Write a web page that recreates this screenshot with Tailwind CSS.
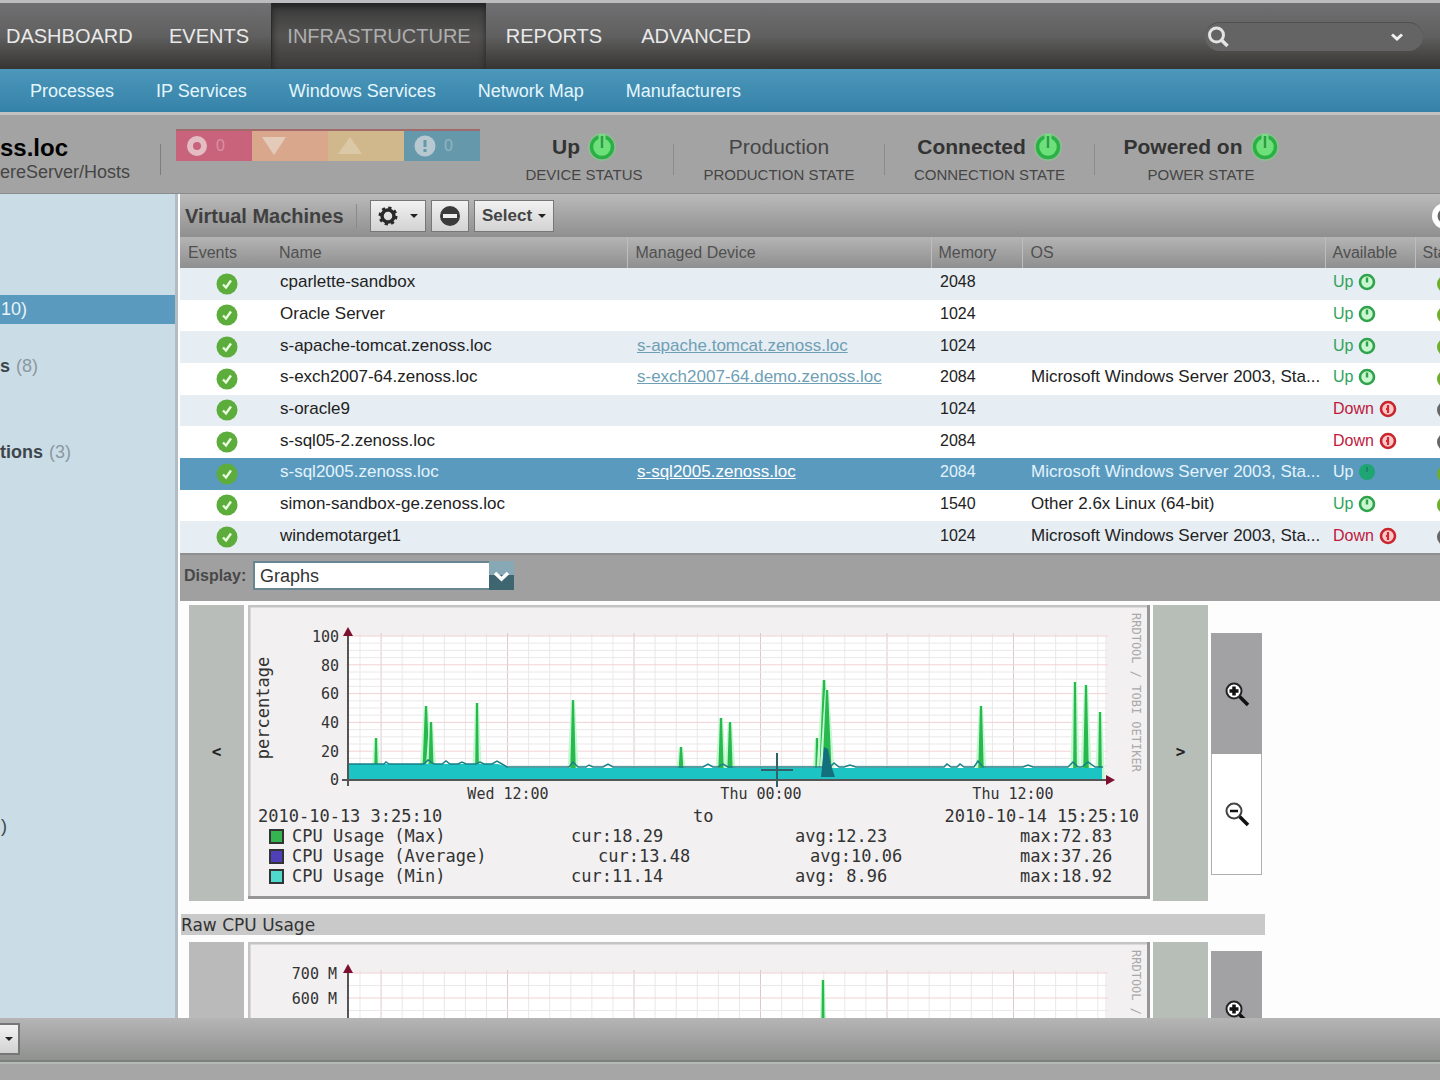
<!DOCTYPE html>
<html lang="en">
<head>
  <meta charset="UTF-8" />
  <meta name="viewport" content="width=device-width, initial-scale=1.0" />
  <title>Infrastructure - Virtual Machines</title>
  <script src="https://cdn.jsdelivr.net/npm/@tailwindcss/browser@4"></script>
</head>
<body class="h-screen flex flex-col overflow-hidden bg-[#a5a5a5] font-['Liberation_Sans',Arial,sans-serif] text-[#222]">

<!-- Shared icons -->
<svg class="hidden">
  <symbol id="power" viewBox="0 0 28 28">
    <circle cx="14" cy="14" r="14" fill="#7ad884" opacity=".5"/>
    <circle cx="14" cy="14" r="10.5" fill="#6ee07a" stroke="#2bb045" stroke-width="3.500"/>
    <path d="M14 1v13" stroke="#79dc85" stroke-width="7"/>
    <path d="M14 3v12" stroke="#2ba043" stroke-width="2.500"/>
  </symbol>
  <symbol id="check" viewBox="0 0 22 22">
    <circle cx="11" cy="11" r="10.5" fill="#5cad3c"/>
    <path d="M7 11.500l3 3L15 7.500" fill="none" stroke="#eaffe0" stroke-width="2.400"/>
  </symbol>
  <symbol id="up" viewBox="0 0 18 18">
    <circle cx="9" cy="9" r="7" fill="#c9f7cf" stroke="#2fa34c" stroke-width="2.600"/>
    <path d="M9 4.500v5" stroke="#2fa34c" stroke-width="2.400"/>
  </symbol>
  <symbol id="up-selected" viewBox="0 0 18 18">
    <circle cx="9" cy="9" r="8" fill="#1fa573"/>
    <path d="M9 4v5" stroke="#158a64" stroke-width="2"/>
  </symbol>
  <symbol id="down" viewBox="0 0 18 18">
    <circle cx="9" cy="9" r="7" fill="#fbc9c9" stroke="#c9252d" stroke-width="2.600"/>
    <path d="M9 5v8M7 9h2" stroke="#d8262d" stroke-width="2.200"/>
  </symbol>
  <symbol id="zoom-in" viewBox="0 0 26 26">
    <path d="M15 15l9 9" stroke="#111" stroke-width="3.500"/>
    <circle cx="10" cy="10" r="7.500" fill="#fff" stroke="#222" stroke-width="2"/>
    <path d="M10 5.500v9M5.500 10h9" stroke="#111" stroke-width="3.500"/>
  </symbol>
  <symbol id="zoom-out" viewBox="0 0 26 26">
    <path d="M15 15l9 9" stroke="#111" stroke-width="3.500"/>
    <circle cx="10" cy="10" r="7.500" fill="#fff" stroke="#444" stroke-width="2"/>
    <path d="M6 10h8" stroke="#111" stroke-width="2.500"/>
  </symbol>
</svg>

<div class="h-[3px] shrink-0 bg-[#bdbcbe]"></div>

<!-- Main navigation -->
<header class="h-[66px] shrink-0 flex items-center bg-linear-to-b from-[#706f71] via-[#606060] to-[#363532] text-xl text-[#e9e9e9]">
  <nav class="flex h-full items-center">
    <a href="#" class="w-[147px] pl-[6px]">DASHBOARD</a>
    <a href="#" class="w-[124px] text-center">EVENTS</a>
    <a href="#" class="w-[215px] h-full flex items-center justify-center bg-linear-to-b from-[#3a3a3a] via-[#545352] to-[#3b3a38] border-l border-[#2a2a2a] shadow-[inset_0_4px_6px_#222] text-[#aeaeae]">INFRASTRUCTURE</a>
    <a href="#" class="w-[136px] text-center">REPORTS</a>
    <a href="#" class="w-[148px] text-center">ADVANCED</a>
  </nav>
  <form class="ml-auto mr-[17px] w-[218px] h-[29px] rounded-full bg-[#646464] border-t border-[#505050] flex items-center px-[2px]">
    <svg class="size-[22px]" viewBox="0 0 22 22" fill="none" stroke="#e4e4e4"><circle cx="9.500" cy="9" r="7" stroke-width="3"/><path d="M14.500 14l6 6" stroke-width="3.500"/></svg>
    <input type="search" aria-label="Search" class="flex-1 min-w-0 bg-transparent text-base outline-none">
    <button type="button" aria-label="Search options" class="mr-[18px]">
      <svg class="w-3 h-2" viewBox="0 0 12 8" fill="none" stroke="#f0f0f0" stroke-width="3"><path d="M1 1.500l5 4.500 5-4.500"/></svg>
    </button>
  </form>
</header>

<!-- Sub navigation -->
<nav class="h-[43px] shrink-0 flex items-center gap-[42px] pl-[30px] bg-linear-to-b from-[#4c97ba] to-[#3582a9] text-lg text-[#e4f6fd] whitespace-nowrap">
  <a href="#">Processes</a>
  <a href="#">IP Services</a>
  <a href="#">Windows Services</a>
  <a href="#">Network Map</a>
  <a href="#">Manufacturers</a>
</nav>

<!-- Device summary -->
<section class="h-[82px] shrink-0 flex border-t-3 border-[#c2c2c2] border-b border-b-[#8c8c8c] bg-[#a3a3a3] text-[#454545]">
  <div class="w-[160px] pt-[19px]">
    <h1 class="text-2xl leading-7 font-bold text-black">ss.loc</h1>
    <p class="text-lg leading-5">ereServer/Hosts</p>
  </div>
  <div class="h-[31px] mt-[29px] border-l border-[#7d7d7d]"></div>
  <div class="ml-[15px] mt-[14px] w-[304px] h-[32px] grid grid-cols-4 border-t-2 border-t-[#a16b6b] text-base text-white/30">
    <div class="flex items-center gap-2 pl-[10px] bg-[#c9637b]">
      <svg class="size-[22px]" viewBox="0 0 22 22"><circle cx="11" cy="11" r="7" fill="none" stroke="#e3bcc4" stroke-width="6"/></svg>0
    </div>
    <div class="flex items-center pl-[10px] bg-[#d9a78b]">
      <svg class="w-6 h-5" viewBox="0 0 24 20"><path d="M0 1h24L12 19z" fill="#e4cbb9"/></svg>
    </div>
    <div class="flex items-center pl-[10px] bg-[#d1b78c]">
      <svg class="w-6 h-5" viewBox="0 0 24 20"><path d="M0 18h24L12 1z" fill="#dac8a6"/></svg>
    </div>
    <div class="flex items-center gap-2 pl-[10px] bg-[#6598aa]">
      <svg class="size-[22px]" viewBox="0 0 22 22"><circle cx="11" cy="11" r="10.500" fill="#b7c8d1"/><path d="M11 5v7M11 14v3" stroke="#6598aa" stroke-width="3"/></svg>0
    </div>
  </div>
  <div class="w-[193px] pl-[15px] pt-[18px] text-center">
    <p class="flex items-center justify-center gap-2 h-7 text-[21px] font-bold text-[#333]">Up <svg class="size-7"><use href="#power"/></svg></p>
    <p class="text-[15px] leading-[28px]">DEVICE STATUS</p>
  </div>
  <div class="h-[31px] mt-[29px] border-l border-[#8a8a8a]"></div>
  <div class="w-[210px] pt-[18px] text-center">
    <p class="h-7 text-[21px] leading-7">Production</p>
    <p class="text-[15px] leading-[28px]">PRODUCTION STATE</p>
  </div>
  <div class="h-[31px] mt-[29px] border-l border-[#8a8a8a]"></div>
  <div class="w-[209px] pt-[18px] text-center">
    <p class="flex items-center justify-center gap-2 h-7 text-[21px] font-bold text-[#333]">Connected <svg class="size-7"><use href="#power"/></svg></p>
    <p class="text-[15px] leading-[28px]">CONNECTION STATE</p>
  </div>
  <div class="h-[31px] mt-[29px] border-l border-[#8a8a8a]"></div>
  <div class="w-[212px] pt-[18px] text-center">
    <p class="flex items-center justify-center gap-2 h-7 text-[21px] font-bold text-[#333]">Powered on <svg class="size-7"><use href="#power"/></svg></p>
    <p class="text-[15px] leading-[28px]">POWER STATE</p>
  </div>
</section>

<div class="flex-1 min-h-0 flex">
  <!-- Component tree -->
  <aside class="w-[178px] shrink-0 border-r-3 border-[#b3bcc2] bg-[#cadde7] text-lg leading-[29px] text-[#8b98a0] overflow-hidden">
    <div class="mt-[101px] pl-[1px] bg-[#5b9abf] text-[#e6f4fb]">10)</div>
    <div class="mt-[28px] flex gap-[6px]"><b class="text-[#3e464b]">s</b>(8)</div>
    <div class="mt-[57px] flex gap-[6px]"><b class="text-[#3e464b]">tions</b>(3)</div>
    <div class="mt-[345px] pl-[1px] text-[#3e464b]">)</div>
  </aside>

  <main class="flex-1 min-w-0 flex flex-col pl-[2px] bg-white overflow-hidden">
    <div class="h-[43px] shrink-0 flex items-center pl-[5px] bg-linear-to-b from-[#bababa] to-[#8f8f8f]">
      <h2 class="w-[171px] text-xl font-bold text-[#404040]">Virtual Machines</h2>
      <div class="h-6 w-[14px] border-l border-[#8a8a8a]"></div>
      <div class="flex gap-[5px]">
        <button aria-label="Actions" class="w-[56px] h-8 flex items-center justify-center gap-3 border border-[#777] bg-linear-to-b from-[#f2f2f2] to-[#d2d2d2]">
          <svg class="size-5" viewBox="0 0 20 20" fill="none" stroke="#2a2a2a"><circle cx="10" cy="10" r="8" stroke-width="3" stroke-dasharray="3.140 3.140"/><circle cx="10" cy="10" r="6" stroke-width="3.500"/></svg>
          <svg class="w-2 h-1" viewBox="0 0 8 4"><path d="M0 0h8L4 4z" fill="#222"/></svg>
        </button>
        <button aria-label="Remove" class="w-[38px] h-8 flex items-center justify-center border border-[#777] bg-linear-to-b from-[#f2f2f2] to-[#d2d2d2]">
          <svg class="size-5" viewBox="0 0 20 20"><circle cx="10" cy="10" r="10" fill="#3a3a3a"/><path d="M3 10h14" stroke="#eee" stroke-width="4"/></svg>
        </button>
        <button class="w-[80px] h-8 flex items-center justify-center gap-[6px] border border-[#777] bg-linear-to-b from-[#f2f2f2] to-[#d2d2d2] text-[17px] font-bold text-[#444]">
          Select
          <svg class="w-2 h-1" viewBox="0 0 8 4"><path d="M0 0h8L4 4z" fill="#222"/></svg>
        </button>
      </div>
      <svg class="ml-auto -mr-[18px] size-[26px] shrink-0" viewBox="0 0 26 26"><circle cx="13" cy="13" r="13" fill="#fff"/><circle cx="13" cy="13" r="6" fill="none" stroke="#666" stroke-width="3"/></svg>
    </div>

    <table class="w-full h-[316px] shrink-0 table-fixed text-[17px] text-left leading-5">
      <colgroup>
        <col class="w-[91px]"><col class="w-[356px]"><col class="w-[304px]"><col class="w-[91px]"><col class="w-[303px]"><col class="w-[90px]"><col>
      </colgroup>
      <thead>
        <tr class="h-[31px] bg-linear-to-b from-[#b4b4b4] to-[#8f8f8f] text-base leading-5 text-[#505050]">
          <th class="font-normal pl-2">Events</th>
          <th class="font-normal pl-2">Name</th>
          <th class="font-normal pl-2 border-l border-[#bdbdbd]">Managed Device</th>
          <th class="font-normal pl-[7px] border-l border-[#bdbdbd]">Memory</th>
          <th class="font-normal pl-2 border-l border-[#bdbdbd]">OS</th>
          <th class="font-normal pl-[7px] border-l border-[#bdbdbd]">Available</th>
          <th class="font-normal pl-[7px] border-l border-[#bdbdbd] overflow-hidden">State</th>
        </tr>
      </thead>
      <tbody id="vmRows"></tbody>
    </table>

    <div class="h-[48px] shrink-0 flex items-center pl-1 pb-[5px] border-t-2 border-[#8f8f8f] bg-[#a0a0a0]">
      <label for="display" class="w-[69px] text-base font-bold text-[#484848]">Display:</label>
      <div class="relative">
        <select id="display" class="appearance-none w-[261px] h-[29px] pl-[5px] bg-white border-2 border-[#688691] text-lg leading-5 text-[#333]">
          <option>Graphs</option>
          <option>Events</option>
          <option>Details</option>
        </select>
        <svg class="absolute right-0 top-0 w-[25px] h-[29px] pointer-events-none" viewBox="0 0 25 29">
          <path d="M0 0h25v14H0z" fill="#86a9b5"/><path d="M0 14h25v15H0z" fill="#3d6670"/>
          <path d="M6 12l6.500 6 6.500-6" fill="none" stroke="#fff" stroke-width="3.500"/>
        </svg>
      </div>
    </div>

    <!-- Graphs -->
    <div class="flex-1 min-h-0 overflow-y-auto [scrollbar-width:none] pt-[4px] bg-[#fdfdfd]">
      <div class="flex pl-[9px]">
        <button aria-label="Earlier" class="w-[55px] h-[296px] pb-[2px] bg-[#b9bdb9] font-['DejaVu_Sans_Mono',monospace] text-base font-bold">&lt;</button>
        <svg id="cpuGraph" class="ml-[4px] w-[902px] h-[294px] shrink-0 font-['DejaVu_Sans_Mono',monospace]" viewBox="0 0 902 294" fill="#333">
          <rect width="902" height="294" fill="#f2f0f1"/>
          <path d="M1 294V1h901" fill="none" stroke="#c4c4c4" stroke-width="3"/>
          <path d="M0 292.500h900.500V0" fill="none" stroke="#969696" stroke-width="3"/>
          <rect x="100" y="31" width="757" height="144" fill="#fff"/>
          <g class="grid"></g>
          <g class="spikes"></g>
          <path fill="#1cc4c3" d="M100 159H250L262 163H854V175H100z"/>
          <path fill="none" stroke="#178088" stroke-width="1.500" d="M100 159H136l2-2 3 2H176l4-4 6 4h8l4-3 4 3h8l4-2 4 2h10l4-2 4 2h8l5-3 5 3 5 3h62l4-5 5 5h8l3-2 4 2h10l5-3 5 3h90l5-3 5 3h5l5-3 5 3h93h9l4-4 5 4h5l6-2 6 2h88l3-3 4 3h6l3-3 4 3h10l4-6 5 6h40l5-2 5 2h35l5-5 5 5h4l6-5 7 5h8"/>
          <path d="M573 172l3-30 4 2 3 16 4 12z" fill="#14707c"/>
          <path d="M100 30v151M94 175h766" fill="none" stroke="#555" stroke-width="2"/>
          <path d="M95 31l5-9 5 9z" fill="#7d1030"/>
          <path d="M858 170l9 5-9 5z" fill="#7d1030"/>
          <path d="M513 165h32M529 148v34" stroke="#35606a" stroke-width="2"/>
          <g font-size="15" text-anchor="end">
            <text x="91" y="37">100</text><text x="91" y="66">80</text><text x="91" y="94">60</text>
            <text x="91" y="123">40</text><text x="91" y="152">20</text><text x="91" y="180">0</text>
          </g>
          <g font-size="15" text-anchor="middle">
            <text x="260" y="194">Wed 12:00</text><text x="513" y="194">Thu 00:00</text><text x="765" y="194">Thu 12:00</text>
          </g>
          <text font-size="17" text-anchor="middle" transform="translate(21 103) rotate(-90)">percentage</text>
          <text font-size="12" fill="#a9a9a9" transform="translate(884 8) rotate(90)">RRDTOOL / TOBI OETIKER</text>
          <g font-size="17">
            <text x="10" y="217">2010-10-13 3:25:10</text>
            <text x="445" y="217">to</text>
            <text x="891" y="217" text-anchor="end">2010-10-14 15:25:10</text>
            <text x="44" y="237">CPU Usage (Max)</text><text x="323" y="237">cur:18.29</text><text x="547" y="237">avg:12.23</text><text x="772" y="237">max:72.83</text>
            <text x="44" y="257">CPU Usage (Average)</text><text x="350" y="257">cur:13.48</text><text x="562" y="257">avg:10.06</text><text x="772" y="257">max:37.26</text>
            <text x="44" y="277">CPU Usage (Min)</text><text x="323" y="277">cur:11.14</text><text x="547" y="277">avg: 8.96</text><text x="772" y="277">max:18.92</text>
          </g>
          <g stroke="#333" stroke-width="2">
            <rect x="22" y="225" width="13" height="13" fill="#35b550"/>
            <rect x="22" y="245" width="13" height="13" fill="#5040b8"/>
            <rect x="22" y="265" width="13" height="13" fill="#4fd8cc"/>
          </g>
        </svg>
        <button aria-label="Later" class="ml-[3px] w-[55px] h-[296px] pb-[2px] bg-[#b7beb8] font-['DejaVu_Sans_Mono',monospace] text-base font-bold">&gt;</button>
        <div class="ml-[3px] mt-[28px] w-[51px] flex flex-col">
          <button aria-label="Zoom in" class="h-[121px] flex items-center justify-center bg-[#a2a2a4]"><svg class="size-[26px]"><use href="#zoom-in"/></svg></button>
          <button aria-label="Zoom out" class="h-[121px] flex items-center justify-center bg-white border border-t-0 border-[#b0b0b0]"><svg class="size-[26px]"><use href="#zoom-out"/></svg></button>
        </div>
      </div>

      <h3 class="mt-[13px] ml-[1px] w-[1084px] h-[21px] bg-[#c9c9c9] font-['DejaVu_Sans',sans-serif] text-[17px] leading-[22px] text-[#333]">Raw CPU Usage</h3>

      <div class="mt-[7px] flex pl-[9px]">
        <button aria-label="Earlier" class="w-[55px] h-[296px] bg-[#b9bab9] font-['DejaVu_Sans_Mono',monospace] text-base font-bold">&lt;</button>
        <svg id="rawGraph" class="ml-[4px] w-[902px] h-[294px] shrink-0 font-['DejaVu_Sans_Mono',monospace]" viewBox="0 0 902 294" fill="#333">
          <rect width="902" height="294" fill="#f2f0f1"/>
          <path d="M1 294V1h901" fill="none" stroke="#c4c4c4" stroke-width="3"/>
          <path d="M0 292.500h900.500V0" fill="none" stroke="#969696" stroke-width="3"/>
          <rect x="100" y="31" width="757" height="175" fill="#fff"/>
          <g class="grid"></g>
          <g class="spikes"></g>
          <path d="M100 30v182M94 206h766" fill="none" stroke="#555" stroke-width="2"/>
          <path d="M95 31l5-9 5 9z" fill="#7d1030"/>
          <g font-size="15" text-anchor="end">
            <text x="89" y="37">700 M</text><text x="89" y="62">600 M</text>
          </g>
          <text font-size="12" fill="#a9a9a9" transform="translate(884 8) rotate(90)">RRDTOOL / TOBI OETIKER</text>
        </svg>
        <button aria-label="Later" class="ml-[3px] w-[55px] h-[296px] bg-[#b7beb8] font-['DejaVu_Sans_Mono',monospace] text-base font-bold">&gt;</button>
        <div class="ml-[3px] mt-[9px] w-[51px] flex flex-col">
          <button aria-label="Zoom in" class="h-[121px] flex items-center justify-center bg-[#a2a2a4]"><svg class="size-[26px]"><use href="#zoom-in"/></svg></button>
        </div>
      </div>
    </div>
  </main>
</div>

<!-- Bottom toolbar -->
<footer class="shrink-0">
  <div class="h-[44px] flex items-center border-b-2 border-[#7c807d] bg-linear-to-b from-[#b5b5b5] to-[#8f918f]">
    <button aria-label="Menu" class="w-[20px] h-8 flex items-center justify-center border-2 border-l-0 border-[#777] bg-linear-to-b from-[#f2f2f2] to-[#d2d2d2]">
      <svg class="w-2 h-1" viewBox="0 0 8 4"><path d="M0 0h8L4 4z" fill="#222"/></svg>
    </button>
  </div>
  <div class="h-[18px] border-t-2 border-[#b3b9b6] bg-[#a5a6a5]"></div>
</footer>

<script>
  const vms = [
    { name: "cparlette-sandbox", device: "", memory: 2048, os: "", up: true },
    { name: "Oracle Server", device: "", memory: 1024, os: "", up: true },
    { name: "s-apache-tomcat.zenoss.loc", device: "s-apache.tomcat.zenoss.loc", memory: 1024, os: "", up: true },
    { name: "s-exch2007-64.zenoss.loc", device: "s-exch2007-64.demo.zenoss.loc", memory: 2084, os: "Microsoft Windows Server 2003, Sta...", up: true },
    { name: "s-oracle9", device: "", memory: 1024, os: "", up: false },
    { name: "s-sql05-2.zenoss.loc", device: "", memory: 2084, os: "", up: false },
    { name: "s-sql2005.zenoss.loc", device: "s-sql2005.zenoss.loc", memory: 2084, os: "Microsoft Windows Server 2003, Sta...", up: true, selected: true },
    { name: "simon-sandbox-ge.zenoss.loc", device: "", memory: 1540, os: "Other 2.6x Linux (64-bit)", up: true },
    { name: "windemotarget1", device: "", memory: 1024, os: "Microsoft Windows Server 2003, Sta...", up: false },
  ];

  document.getElementById("vmRows").innerHTML = vms.map((vm) => {
    const rowClass = vm.selected ? "bg-[#5b9abf] text-[#e3f4fd]" : "odd:bg-[#e6edf3] even:bg-white";
    const linkClass = vm.selected ? "underline text-white" : "underline text-[#6f9fb5]";
    const stateClass = vm.selected ? "" : vm.up ? "text-[#2fa35a]" : "text-[#c0183c]";
    const icon = vm.selected ? "up-selected" : vm.up ? "up" : "down";
    return `
      <tr class="${rowClass}">
        <td class="pl-[36px]"><svg class="size-[22px]"><use href="#check"/></svg></td>
        <td class="pl-[9px] pb-[3px] truncate">${vm.name}</td>
        <td class="pl-[10px] pb-[3px] truncate">${vm.device ? `<a href="#" class="${linkClass}">${vm.device}</a>` : ""}</td>
        <td class="pl-[9px] pb-[3px] text-base leading-5">${vm.memory}</td>
        <td class="pl-[9px] pb-[3px] whitespace-nowrap">${vm.os}</td>
        <td class="pl-[8px] pb-[3px] text-base leading-5 ${stateClass}"><span class="flex items-center gap-[5px]">${vm.up ? "Up" : "Down"}<svg class="size-[18px] shrink-0"><use href="#${icon}"/></svg></span></td>
        <td class="pl-[21px] overflow-hidden"><svg class="size-[20px] max-w-none" viewBox="0 0 20 20"><circle cx="10" cy="10" r="9" fill="${vm.up ? "#6fae2c" : "#666"}"/></svg></td>
      </tr>`;
  }).join("");

  // Grid lines: every sixth vertical and every "major" horizontal is darker
  function drawGrid(id, bottom, step, major) {
    let out = "";
    for (let i = 0; i < 36; i++) {
      const x = 112 + i * 21.08;
      out += `<path d="M${x} 28V${bottom}" stroke="${i % 6 === 1 ? "#dcc8ca" : "#ebe7e8"}"/>`;
    }
    for (let i = 0, y = bottom; y >= 30; i++, y = bottom - i * step) {
      out += `<path d="M98 ${y}H860" stroke="${i % major === 0 ? "#f1d2d5" : "#ebe8e8"}"/>`;
    }
    document.querySelector(`#${id} .grid`).innerHTML = out;
  }

  function drawSpikes(id, bottom, spikes) {
    document.querySelector(`#${id} .spikes`).innerHTML = spikes.map(([x, y, w]) => `
      <path d="M${x - w - 3} ${bottom}L${x - 2} ${y}h4L${x + w + 3} ${bottom}z" fill="#c4f8d0"/>
      <path d="M${x - w} ${bottom}L${x - 1} ${y}h2L${x + w} ${bottom}z" fill="#27b84e"/>`).join("");
  }

  drawGrid("cpuGraph", 175, 7.2, 4);
  drawGrid("rawGraph", 206, 12.5, 2);
  drawSpikes("cpuGraph", 175, [
    [128, 133, 2], [178, 101, 4], [183, 117, 3], [229, 98, 2], [325, 95, 3], [433, 142, 3],
    [473, 113, 3], [482, 117, 3], [569, 133, 2], [576, 75, 5], [579, 85, 5], [733, 101, 3],
    [827, 77, 2], [838, 80, 3], [852, 107, 2],
  ]);
  drawSpikes("rawGraph", 206, [[575, 38, 3]]);
</script>

</body>
</html>
